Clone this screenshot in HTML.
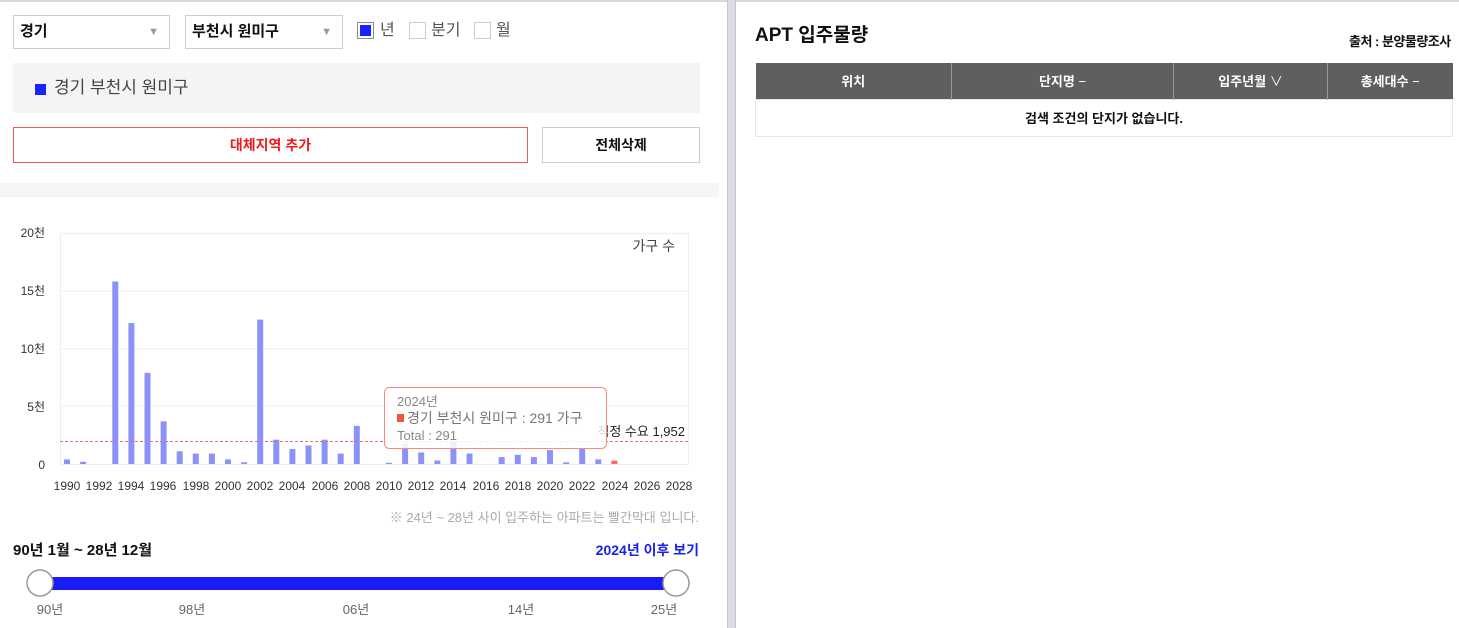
<!DOCTYPE html>
<html><head><meta charset="utf-8"><style>
*{margin:0;padding:0;box-sizing:border-box}
body{width:1459px;height:628px;overflow:hidden;background:#fff;font-family:"Liberation Sans","Noto Sans CJK KR",sans-serif;position:relative;color:#222}
.a{position:absolute}
.sel{border:1px solid #ccc;background:#fff;height:34px;font-size:15px;font-weight:bold;line-height:32px;padding-left:6px;color:#111}
.sel .ar{position:absolute;right:10px;top:0;font-size:11px;color:#999;font-weight:normal}
.cb{width:17px;height:17px;border:1px solid #ccc;background:#fff}
.lbl{font-size:16px;color:#555;line-height:20px}
th{background:#5f5f5f;color:#fff;font-size:13px;font-weight:bold;height:36px;border-right:1px solid #999}
</style></head><body>
<div class="a" style="left:0;top:0;width:1459px;height:2px;background:#d8d8dc"></div>
<div class="a" style="left:727px;top:0;width:9px;height:628px;background:#dcdce2;border-left:1px solid #c8c8cc;border-right:1px solid #c8c8cc"></div>

<div class="a sel" style="left:13px;top:15px;width:157px">경기<span class="ar">▼</span></div>
<div class="a sel" style="left:185px;top:15px;width:158px">부천시 원미구<span class="ar">▼</span></div>
<div class="a cb" style="left:357px;top:22px;border-color:#88a;padding:2px"><div style="width:11px;height:11px;background:#1a22ff"></div></div>
<div class="a lbl" style="left:380px;top:21px">년</div>
<div class="a cb" style="left:409px;top:22px"></div>
<div class="a lbl" style="left:431px;top:21px">분기</div>
<div class="a cb" style="left:474px;top:22px"></div>
<div class="a lbl" style="left:496px;top:21px">월</div>

<div class="a" style="left:13px;top:63px;width:687px;height:50px;background:#f4f4f4"></div>
<div class="a" style="left:35px;top:84px;width:11px;height:11px;background:#1a22ff"></div>
<div class="a" style="left:54px;top:77px;font-size:17px;color:#444;line-height:22px">경기 부천시 원미구</div>

<div class="a" style="left:13px;top:127px;width:515px;height:36px;border:1px solid #f0555a;text-align:center;line-height:34px;color:#f01a1a;font-weight:bold;font-size:14px">대체지역 추가</div>
<div class="a" style="left:542px;top:127px;width:158px;height:36px;border:1px solid #ccc;text-align:center;line-height:34px;color:#111;font-weight:bold;font-size:14px">전체삭제</div>

<div class="a" style="left:0;top:183px;width:719px;height:14px;background:#f5f5f5"></div>

<svg class="a" style="left:0;top:0" width="727" height="628">
<g font-family="Liberation Sans,Noto Sans CJK KR,sans-serif" font-size="12" fill="#333">
<rect x="60.5" y="233.5" width="628" height="231" fill="none" stroke="#eee"/>
<line x1="60" x2="688" y1="291" y2="291" stroke="#eee"/>
<line x1="60" x2="688" y1="349" y2="349" stroke="#eee"/>
<line x1="60" x2="688" y1="406" y2="406" stroke="#eee"/>
<text x="45" y="237" text-anchor="end">20천</text>
<text x="45" y="295" text-anchor="end">15천</text>
<text x="45" y="353" text-anchor="end">10천</text>
<text x="45" y="411" text-anchor="end">5천</text>
<text x="45" y="469" text-anchor="end">0</text>
<text x="675" y="251" text-anchor="end" font-size="14" fill="#444">가구 수</text>
<g fill="#8b93fb">
<rect x="64" y="459.4" width="6" height="4.6"/><rect x="80.1" y="461.7" width="6" height="2.3"/>
<rect x="112.3" y="281.5" width="6" height="182.5"/><rect x="128.4" y="323.1" width="6" height="140.9"/>
<rect x="144.5" y="372.8" width="6" height="91.2"/><rect x="160.6" y="421.3" width="6" height="42.7"/>
<rect x="176.7" y="451.3" width="6" height="12.7"/><rect x="192.8" y="453.6" width="6" height="10.4"/>
<rect x="208.9" y="453.6" width="6" height="10.4"/><rect x="225" y="459.4" width="6" height="4.6"/>
<rect x="241.1" y="462.3" width="6" height="1.7"/><rect x="257.2" y="319.6" width="6" height="144.4"/>
<rect x="273.3" y="439.7" width="6" height="24.3"/><rect x="289.4" y="449" width="6" height="15"/>
<rect x="305.5" y="445.5" width="6" height="18.5"/><rect x="321.6" y="439.7" width="6" height="24.3"/>
<rect x="337.7" y="453.6" width="6" height="10.4"/><rect x="353.8" y="425.9" width="6" height="38.1"/>
<rect x="386" y="462.8" width="6" height="1.2"/><rect x="402.1" y="443.2" width="6" height="20.8"/>
<rect x="418.2" y="452.4" width="6" height="11.6"/><rect x="434.3" y="460.5" width="6" height="3.5"/>
<rect x="450.4" y="442.1" width="6" height="21.9"/><rect x="466.5" y="453.6" width="6" height="10.4"/>
<rect x="498.7" y="457.1" width="6" height="6.9"/><rect x="514.8" y="454.8" width="6" height="9.2"/>
<rect x="530.9" y="457.1" width="6" height="6.9"/><rect x="547" y="450.1" width="6" height="13.9"/>
<rect x="563.1" y="462.3" width="6" height="1.7"/><rect x="579.2" y="449" width="6" height="15"/>
<rect x="595.3" y="459.4" width="6" height="4.6"/>
</g>
<rect x="611.4" y="460.6" width="6" height="3.4" fill="#fa6b5e"/>
<text x="685" y="436" text-anchor="end" font-size="13" fill="#222">적정 수요 1,952</text>
<g font-size="12" text-anchor="middle">
<text x="67" y="490">1990</text><text x="99" y="490">1992</text><text x="131" y="490">1994</text><text x="163" y="490">1996</text><text x="196" y="490">1998</text><text x="228" y="490">2000</text><text x="260" y="490">2002</text><text x="292" y="490">2004</text><text x="325" y="490">2006</text><text x="357" y="490">2008</text><text x="389" y="490">2010</text><text x="421" y="490">2012</text><text x="453" y="490">2014</text><text x="486" y="490">2016</text><text x="518" y="490">2018</text><text x="550" y="490">2020</text><text x="582" y="490">2022</text><text x="615" y="490">2024</text><text x="647" y="490">2026</text><text x="679" y="490">2028</text>
</g>
<text x="699" y="522" text-anchor="end" font-size="13" fill="#aaa">※ 24년 ~ 28년 사이 입주하는 아파트는 빨간막대 입니다.</text>
<text x="13" y="555" font-size="15" font-weight="bold" fill="#111">90년 1월 ~ 28년 12월</text>
<text x="699" y="555" text-anchor="end" font-size="14" font-weight="bold" fill="#1a22ee">2024년 이후 보기</text>
<rect x="40" y="577" width="636" height="13" fill="#1a1cf5"/>
<circle cx="40" cy="583" r="13" fill="#fff" stroke="#999" stroke-width="1.5"/>
<circle cx="676" cy="583" r="13" fill="#fff" stroke="#999" stroke-width="1.5"/>
<g font-size="13" fill="#666" text-anchor="middle">
<text x="50" y="614">90년</text><text x="192" y="614">98년</text><text x="356" y="614">06년</text><text x="521" y="614">14년</text><text x="664" y="614">25년</text>
</g>
</g></svg>
<div class="a" style="left:60px;top:441px;width:628px;height:0;border-top:1px dashed #f56a6a"></div>
<svg class="a" style="left:0;top:0" width="727" height="628">
<g font-family="Liberation Sans,Noto Sans CJK KR,sans-serif">
<rect x="384.5" y="387.5" width="222" height="61" rx="5" fill="#fff" fill-opacity="0.85" stroke="#f88a80"/>
<text x="397" y="406" font-size="13" fill="#888">2024년</text>
<rect x="397" y="414" width="7" height="8" fill="#f4523f"/>
<text x="407" y="423" font-size="14" fill="#777">경기 부천시 원미구 : 291 가구</text>
<text x="397" y="440" font-size="13" fill="#888">Total : 291</text>
</g></svg>

<div class="a" style="left:755px;top:24px;font-size:19px;font-weight:bold;color:#111;line-height:24px">APT 입주물량</div>
<div class="a" style="left:1349px;top:31px;font-size:13px;font-weight:bold;color:#111;white-space:nowrap;letter-spacing:-0.5px">출처 : 분양물량조사</div>
<table class="a" style="left:755px;top:63px;width:698px;border-collapse:collapse">
<tr><th style="width:196px">위치</th><th style="width:222px">단지명 <span style="font-weight:normal">−</span></th><th style="width:154px">입주년월 <span style="font-weight:normal">∨</span></th><th style="border-right:none">총세대수 <span style="font-weight:normal">−</span></th></tr>
<tr><td colspan="4" style="height:37px;border:1px solid #e6e6e6;text-align:center;font-size:13px;font-weight:bold;color:#111">검색 조건의 단지가 없습니다.</td></tr>
</table>
</body></html>
